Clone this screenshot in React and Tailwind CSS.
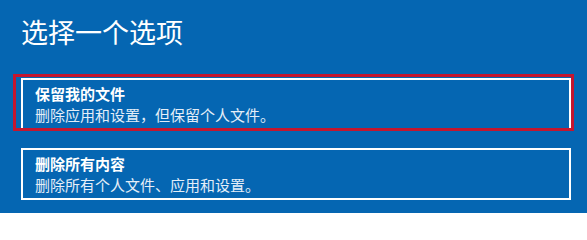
export default function App() {
  const font = { fontFamily: '"Noto Sans CJK SC", "Noto Sans", sans-serif' };
  return (
    <div
      className="w-[587px] h-[213px] bg-[#0566b2] overflow-hidden pl-[21px] pr-[16px] pt-[18px] flex flex-col"
      style={font}
    >
      <h1 className="text-[27px] leading-[27px] font-normal text-white">选择一个选项</h1>
      <div className="relative mt-[33px] w-[550px]">
        <div className="border-2 border-white h-[52px] pl-[12px] pt-[3px] flex flex-col">
          <div className="text-[15px] leading-[21px] font-bold text-white">保留我的文件</div>
          <div className="text-[15px] leading-[21px] text-[#e4eef8]">删除应用和设置，但保留个人文件。</div>
        </div>
        <div className="absolute left-[-8px] top-[-4px] right-[-3px] bottom-[-1px] border-[3px] border-[#c4162f] pointer-events-none"></div>
      </div>
      <div className="mt-[18px] w-[550px] border-2 border-white h-[52px] pl-[12px] pt-[3px] flex flex-col">
        <div className="text-[15px] leading-[21px] font-bold text-white">删除所有内容</div>
        <div className="text-[15px] leading-[21px] text-[#e4eef8]">删除所有个人文件、应用和设置。</div>
      </div>
    </div>
  );
}
